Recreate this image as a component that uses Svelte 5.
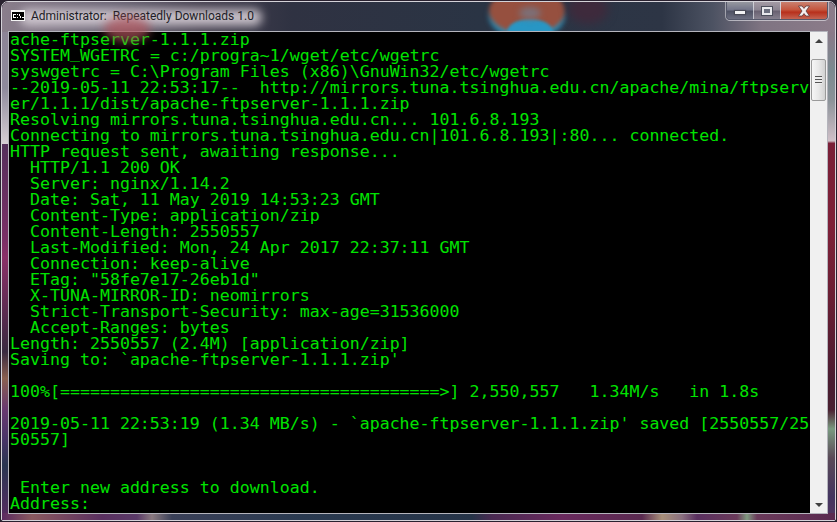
<script lang="ts">
	const head = 'ache-ftpserver-1.1.1.zip\nSYSTEM';
	const lines = [
		'WGETRC = c:/progra~1/wget/etc/wgetrc',
		'syswgetrc = C:\\Program Files (x86)\\GnuWin32/etc/wgetrc',
		'--2019-05-11 22:53:17--  http://mirrors.tuna.tsinghua.edu.cn/apache/mina/ftpserv',
		'er/1.1.1/dist/apache-ftpserver-1.1.1.zip',
		'Resolving mirrors.tuna.tsinghua.edu.cn... 101.6.8.193',
		'Connecting to mirrors.tuna.tsinghua.edu.cn|101.6.8.193|:80... connected.',
		'HTTP request sent, awaiting response...',
		'  HTTP/1.1 200 OK',
		'  Server: nginx/1.14.2',
		'  Date: Sat, 11 May 2019 14:53:23 GMT',
		'  Content-Type: application/zip',
		'  Content-Length: 2550557',
		'  Last-Modified: Mon, 24 Apr 2017 22:37:11 GMT',
		'  Connection: keep-alive',
		'  ETag: "58fe7e17-26eb1d"',
		'  X-TUNA-MIRROR-ID: neomirrors',
		'  Strict-Transport-Security: max-age=31536000',
		'  Accept-Ranges: bytes',
		'Length: 2550557 (2.4M) [application/zip]',
		"Saving to: `apache-ftpserver-1.1.1.zip'",
		'',
		'100%[======================================>] 2,550,557   1.34M/s   in 1.8s',
		'',
		"2019-05-11 22:53:19 (1.34 MB/s) - `apache-ftpserver-1.1.1.zip' saved [2550557/25",
		'50557]',
		'',
		'',
		' Enter new address to download.',
		'Address:'
	];
</script>

<div class="page">
	<div class="window">
		<!-- aero glass: the wallpaper showing through the frame -->
		<div class="glass">
			<div class="glass-top">
				<div class="blob blob-red"></div>
				<div class="blob blob-blue"></div>
				<div class="blob blob-grey"></div>
				<div class="blob blob-plum"></div>
				<div class="blob blob-rose"></div>
				<div class="blob blob-glow"></div>
			</div>
			<div class="glass-left"></div>
			<div class="glass-right"></div>
			<div class="glass-bottom"></div>
		</div>

		<header class="titlebar">
			<svg class="app-icon" width="14" height="11" viewBox="0 0 14 11" shape-rendering="crispEdges">
				<rect width="14" height="11" fill="#f4f4f4" />
				<rect x="1" y="2" width="12" height="8" fill="#000" />
				<path d="M2 4h3v1H2zM2 5h1v2H2zM2 7h3v1H2zM6 4h1v1H6zM6 7h1v1H6zM8 4h1v2H8zM9 6h1v2H9zM11 7h2v1h-2z" fill="#fff" />
			</svg>
			<span class="title">Administrator:&nbsp; Repeatedly Downloads 1.0</span>
			<div class="controls">
				<button class="ctl ctl-min" aria-label="Minimize"><span class="min-glyph"></span></button>
				<button class="ctl ctl-max" aria-label="Maximize"><span class="max-glyph"></span></button>
				<button class="ctl ctl-close" aria-label="Close">
					<svg width="16" height="12" viewBox="0 0 16 12">
						<path d="M2.5 1h3.6L8 3.4 9.9 1h3.6L10 6l3.5 5H9.9L8 8.6 6.1 11H2.5L6 6z" fill="#f4eeee" stroke="#5a3a3c" stroke-width="0.8" />
					</svg>
				</button>
			</div>
		</header>

		<div class="client">
			<pre class="console">{head}<span class="under">_</span>{lines.join('\n')}</pre>
			<div class="scrollbar">
				<div class="arrow up"></div>
				<div class="thumb"><span></span></div>
				<div class="track"></div>
				<div class="arrow down"></div>
			</div>
		</div>
	</div>
</div>

<style>
	:global(body) {
		background: #2a2230;
	}

	.page {
		width: 837px;
		height: 522px;
		box-sizing: border-box;
		padding: 1px;
		overflow: hidden;
	}

	.window {
		position: relative;
		width: 835px;
		height: 520px;
		box-sizing: border-box;
		padding: 0 7px 6px 6px;
		display: flex;
		flex-direction: column;
		border: 1px solid #d4d2d8;
		border-radius: 7px 7px 2px 2px;
		overflow: hidden;
	}

	.glass {
		position: absolute;
		inset: 0;
		overflow: hidden;
		background: #3a2a44;
	}

	.glass-top {
		position: absolute;
		left: 0;
		right: 0;
		top: 0;
		height: 142px;
		overflow: hidden;
		background: linear-gradient(90deg, #8a7e8c 0, #6a6474 110px, #45404f 200px, #2f3242 290px, #2a3444 480px, #2d3545 660px, #4c5262 710px, #7f7482 760px, #8c7c8a 835px);
	}

	.glass-left {
		position: absolute;
		left: 0;
		top: 30px;
		width: 8px;
		height: 112px;
		background: linear-gradient(180deg, #8d8496 0, #8f8a9c 50%, #d6ced4 100%);
	}

	.glass-left::after {
		content: '';
		position: absolute;
		left: 0;
		top: 112px;
		width: 8px;
		height: 378px;
		background: linear-gradient(180deg, #55305c 0, #7a2f66 25%, #8a3068 30%, #4a2a48 50%, #3a2a40 55%, #8a6050 62%, #6a3a70 70%, #4a3468 78%, #2a3550 85%, #40305a 92%, #5a2a60 100%);
	}

	.glass-right {
		position: absolute;
		right: 0;
		top: 30px;
		width: 7px;
		height: 484px;
		background: linear-gradient(180deg, #8a7a88 0, #7a8a90 8%, #8a9298 14%, #d0c0c8 22.5%, #7a2038 23%, #7e2038 40%, #6a1f34 55%, #4a1c30 72%, #4a2030 78%, #7a9a80 82%, #5a4a58 88%, #443560 96%, #503560 100%);
	}

	.glass-bottom {
		position: absolute;
		left: 0;
		right: 0;
		bottom: 0;
		height: 7px;
		background: linear-gradient(90deg, #5a2a60 0, #8a5a60 30px, #7a4a60 55px, #5a3060 100px, #5a3a68 135px, #8a7a80 150px, #3a4058 170px, #2a3a50 300px, #263448 470px, #4a2a52 490px, #6a2a5e 560px, #5a2a50 640px, #a8907a 660px, #8a7080 680px, #5a3060 695px, #6a3a5a 735px, #7f9a80 745px, #6a3a5a 755px, #5a2a50 835px);
	}

	.blob {
		position: absolute;
		border-radius: 50%;
	}

	.blob-red {
		left: 487px;
		top: -14px;
		width: 76px;
		height: 46px;
		background: #96503f;
		filter: blur(2px);
		box-shadow: 0 5px 3px #2a95c0;
	}

	.blob-blue {
		left: 505px;
		top: 17px;
		width: 46px;
		height: 26px;
		background: #2896c4;
		filter: blur(1.5px);
	}

	.blob-grey {
		left: 517px;
		top: 5px;
		width: 22px;
		height: 12px;
		background: #7c7078;
		filter: blur(3px);
	}

	.blob-plum {
		left: 566px;
		top: -8px;
		width: 40px;
		height: 30px;
		background: #3e2a3c;
		filter: blur(5px);
	}

	.blob-glow {
		left: 18px;
		top: 7px;
		width: 242px;
		height: 17px;
		border-radius: 8px;
		background: rgba(212, 204, 212, 0.9);
		filter: blur(5px);
	}

	.blob-rose {
		left: 102px;
		top: 14px;
		width: 46px;
		height: 26px;
		background: #b0545c;
		filter: blur(5px);
		z-index: 1;
		opacity: 0.7;
	}

	.titlebar {
		position: relative;
		height: 29px;
		flex: none;
		display: flex;
		align-items: center;
		padding-left: 3px;
	}

	.app-icon {
		flex: none;
		margin-top: -2px;
		position: relative;
		z-index: 1;
	}

	.title {
		margin-left: 6px;
		margin-top: -2px;
		font-family: Roboto, 'Noto Sans', sans-serif;
		font-size: 12px;
		line-height: 16px;
		color: #1d1d26;
		white-space: nowrap;
	}

	.controls {
		position: absolute;
		top: 0;
		right: 0;
		display: flex;
		height: 17px;
		border: 1px solid #55586a;
		border-top: none;
		border-radius: 0 0 4px 4px;
		box-shadow: 0 1px 0 rgba(235, 235, 240, 0.6), 1px 0 0 rgba(235, 235, 240, 0.5), -1px 0 0 rgba(235, 235, 240, 0.5);
		overflow: hidden;
	}

	.ctl {
		height: 17px;
		padding: 0;
		border: none;
		border-right: 1px solid rgba(235, 235, 240, 0.7);
		display: flex;
		align-items: center;
		justify-content: center;
	}

	.ctl-min {
		width: 27px;
		background: linear-gradient(180deg, #96979f 0, #74768a 45%, #4f5264 55%, #6c6e80 100%);
	}

	.ctl-max {
		width: 27px;
		background: linear-gradient(180deg, #a39aa4 0, #8c8592 45%, #6a6272 55%, #85808e 100%);
	}

	.ctl-close {
		width: 46px;
		border-right: none;
		background: linear-gradient(180deg, #c9806f 0, #c5563e 45%, #b8301c 60%, #c46452 100%);
	}

	.min-glyph {
		width: 10px;
		height: 3px;
		margin-top: 4px;
		background: #f2f2f4;
		box-shadow: 0 0 1px 1px rgba(60, 60, 70, 0.55);
	}

	.max-glyph {
		width: 6px;
		height: 4px;
		border: 2px solid #e8e8ec;
		outline: 1px solid #4d4f5c;
		background: #6d7080;
	}

	.client {
		position: relative;
		flex: 1;
		display: flex;
		min-height: 0;
		border: 1px solid #b4b4bc;
	}

	.console {
		flex: 1;
		min-width: 0;
		margin: 0;
		padding-left: 1px;
		background: #000;
		color: #00e400;
		font-family: 'DejaVu Sans Mono', monospace;
		font-size: 16.6px;
		line-height: 16px;
		white-space: pre;
	}

	/* the underscore sits just under the baseline in the console font */
	.under {
		line-height: 0;
		vertical-align: 3px;
	}

	.scrollbar {
		width: 17px;
		flex: none;
		display: flex;
		flex-direction: column;
		background: #f0f0f0;
	}

	.arrow {
		height: 17px;
		flex: none;
		display: flex;
		align-items: center;
		justify-content: center;
	}

	.arrow::before {
		content: '';
		border-left: 4px solid transparent;
		border-right: 4px solid transparent;
	}

	.arrow.up::before {
		border-bottom: 4px solid #404040;
	}

	.arrow.down::before {
		border-top: 4px solid #404040;
	}

	.thumb {
		height: 40px;
		flex: none;
		margin: 10px 1px 0;
		border: 1px solid #9a9a9a;
		border-radius: 2px;
		background: linear-gradient(90deg, #f6f6f6, #e8e8e8 50%, #d2d2d2);
		display: flex;
		align-items: center;
		justify-content: center;
	}

	.thumb span {
		width: 7px;
		height: 8px;
		background: repeating-linear-gradient(180deg, #555 0 1px, #eee 1px 3px);
	}

	.track {
		flex: 1;
	}
</style>
